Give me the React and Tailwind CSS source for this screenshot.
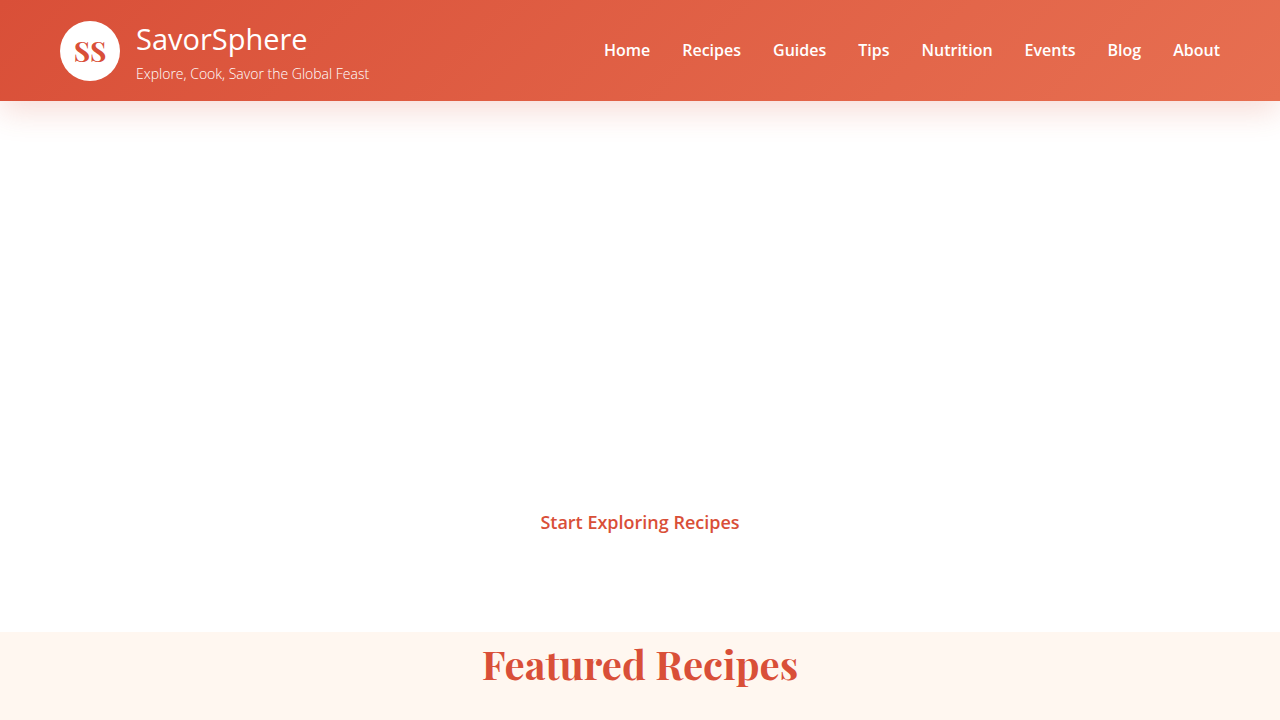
const navLinks = ["Home", "Recipes", "Guides", "Tips", "Nutrition", "Events", "Blog", "About"];

export default function App() {
  return (
    <div className="min-h-screen bg-[#fff7f0] font-['Open_Sans',sans-serif]">
      {/* Header */}
      <header className="relative z-10 bg-linear-135 from-[#d94f38] to-[#e76f51] shadow-[0_10px_30px_rgba(217,79,56,0.2)]">
        <div className="max-w-[1200px] mx-auto px-5 py-4 flex justify-between items-center">
          <div className="flex items-center gap-4">
            <div className="w-15 h-15 bg-white rounded-full flex items-center justify-center">
              <span className="font-['Playfair_Display','Liberation_Serif',serif] font-bold text-[28px] leading-[30px] text-[#d94f38]">SS</span>
            </div>
            <div className="text-white">
              <h1 className="text-[29px] leading-[46px]">SavorSphere</h1>
              <p className="text-sm leading-[23px] font-light">Explore, Cook, Savor the Global Feast</p>
            </div>
          </div>
          <nav className="flex gap-8 pb-0.5">
            {navLinks.map(link => (
              <a key={link} href={`#${link.toLowerCase()}`} className="text-white text-base font-semibold hover:opacity-80">
                {link}
              </a>
            ))}
          </nav>
        </div>
      </header>

      {/* Hero Section */}
      <section className="bg-white pt-[393px] pb-[82px] flex justify-center">
        <button className="bg-white px-10 py-4 rounded-full text-[#d94f38] text-lg leading-6 font-semibold">
          Start Exploring Recipes
        </button>
      </section>

      {/* Featured Recipes */}
      <section className="pt-1 px-5">
        <h2 className="text-center font-['Playfair_Display','Liberation_Serif',serif] font-bold text-[40px] leading-14 text-[#d94f38]">
          Featured Recipes
        </h2>
      </section>
    </div>
  );
}
